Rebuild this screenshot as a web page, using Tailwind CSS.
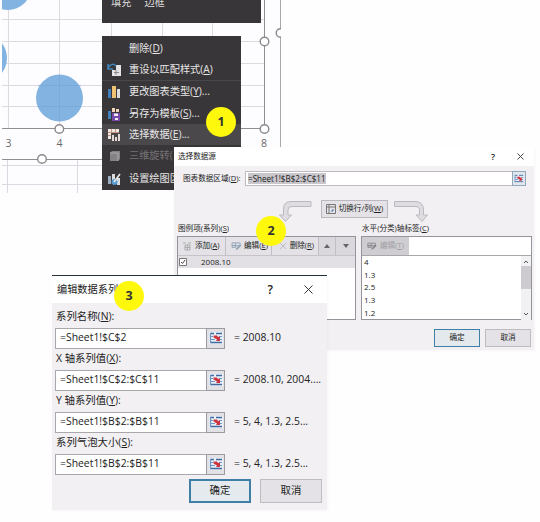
<!DOCTYPE html>
<html lang="zh-CN">
<head>
<meta charset="utf-8">
<title>编辑数据系列</title>
<script src="https://cdn.jsdelivr.net/npm/@tailwindcss/browser@4"></script>
</head>
<body class="bg-[#fefefe]">
<svg width="0" height="0" class="absolute">
  <defs>
    <symbol id="range" viewBox="0 0 14 12">
      <rect width="14" height="12" fill="#eaf0f7"/>
      <path d="M1 1.500h4M7 1.500h6M1 10.500h12" stroke="#41699f" stroke-width="1.300"/>
      <path d="M1 4.500h3M10 4.500h3M1 7.500h5M10 7.500h3M1.500 1v10" stroke="#6f96c4" stroke-width="1.200"/>
      <path d="M4.500 3.500H8L9 5l2-.5V9H7l1-1.500-3.500-2z" fill="#cc3540"/>
    </symbol>
    <symbol id="edit" viewBox="0 0 12 10">
      <path d="M1 1h9v3H1zM1 4h4v2H1zM5 1v3" fill="none" stroke="currentColor"/>
      <path d="M5 9l1-2.500L10 3l1.500 1L7.500 8z" fill="currentColor"/>
    </symbol>
  </defs>
</svg>
<main class="relative h-[522px] w-[540px] overflow-hidden font-['Open_Sans','Noto_Sans_CJK_SC',sans-serif] text-[#222]">

  <!-- chart -->
  <svg class="absolute left-[2px] top-0" width="279" height="193" viewBox="2 0 279 193">
    <rect x="2" width="279" height="193" fill="#fdfcfe"/>
    <path d="M2 19.500H264M2 41.500H264M2 63.500H264M2 85.500H264M2 106.500H264M8.500 0V128M59.500 0V128M111.500 0V128M162.500 0V128M212.500 0V128" stroke="#dcd9df"/>
    <path d="M7.500 160V193M77.500 160V193M2 165.500H102M2 184.500H102" stroke="#dcd9e2"/>
    <g fill="#82b3e1"><circle cx="8" cy="-13" r="23"/><circle cx="-17" cy="58" r="24"/><circle cx="59.500" cy="98" r="23.500"/></g>
    <path d="M38 85.500H81M38 106.500H81M59.500 75V121" stroke="#75a5d5" opacity=".6"/>
    <path d="M2 128.500H264.500M264.500 0V128M2 159.500H102" fill="none" stroke="#908e91"/>
    <path d="M280.500 0V147" stroke="#aaa8ab"/>
    <g fill="#fff" stroke="#8b898c" stroke-width="1.400"><circle cx="59.300" cy="129" r="4.300"/><circle cx="42" cy="159" r="4.300"/><circle cx="264.500" cy="41.500" r="4.300"/><circle cx="264.500" cy="129" r="4.300"/><circle cx="280.500" cy="33" r="4.300"/></g>
    <g font-size="10.500" fill="#6b6b6b" text-anchor="middle"><text x="8.500" y="146.500">3</text><text x="59.500" y="146.500">4</text><text x="264" y="146.500">8</text></g>
  </svg>

  <!-- mini toolbar -->
  <div class="absolute left-[102px] top-0 flex h-[23px] w-[159px] gap-[13px] overflow-hidden bg-[#393639] pl-[9px] text-[10.200px] leading-[10px] text-[#dedede]">
    <span class="-mt-[3px]">填充</span><span class="-mt-[3px]">边框</span>
  </div>

  <!-- context menu -->
  <div class="absolute left-[102px] top-[36px] flex h-[154px] w-[139px] flex-col overflow-hidden bg-[#393639] pt-[2px] text-[10.200px] whitespace-nowrap text-[#e6e6e6]">
    <div class="flex h-[22px] shrink-0 items-center pl-[27px]">删除(<u>D</u>)</div>
    <div class="flex h-[21px] shrink-0 items-center border-b border-[#4a474a]">
      <svg class="mx-[5px]" width="17" height="14"><path d="M5 7h9v6H5zM9 2h5v5H9z" fill="#e4e4e4"/><path d="M7 9.500h5M9 7v5" stroke="#888"/><path d="M1 1v5h5M1 5C4 0 7 1 9 3" fill="none" stroke="#4386bd" stroke-width="1.500"/></svg>重设以匹配样式(<u>A</u>)</div>
    <div class="flex h-[22px] shrink-0 items-center">
      <svg class="mx-[5px]" width="17" height="14"><path d="M1 4h3v9H1z" fill="#3f80bd"/><path d="M5 1h4v12H5z" fill="#edc373"/><path d="M10 4h3v9h-3z" fill="#ddd"/></svg>更改图表类型(<u>Y</u>)...</div>
    <div class="flex h-[21px] shrink-0 items-center">
      <svg class="mx-[5px]" width="17" height="14"><path d="M1 4h3v8H1z" fill="#3f80bd"/><path d="M5 1h3v4H5zM9 2h3v3H9z" fill="#eed4bb"/><path d="M5 6h8v8H5z" fill="#7948ac"/><path d="M7 6.500h4v2.500H7zM8 11h3v2H8z" fill="#eee"/></svg>另存为模板(<u>S</u>)...</div>
    <div class="flex h-[21px] shrink-0 items-center bg-[#4b484b]">
      <svg class="mx-[5px]" width="17" height="14"><path d="M1 1h11v4H4v6H1z" fill="#f0e7e2"/><path d="M1 4.500h11M4.500 1v3M8.500 1v3M1 7.500h3" stroke="#c49482"/><path d="M5 7h2v6H5zM8 9h2v4H8zM11 6h2v7h-2z" fill="#e4d9d6"/></svg>选择数据(<u>E</u>)...</div>
    <div class="flex h-[22px] shrink-0 items-center text-[#757275]">
      <svg class="mx-[5px]" width="17" height="14"><path d="M3 4l2-2h8v8l-2 2H3z" fill="#858285"/><path d="M3 4h8v8" fill="none" stroke="#aaa"/></svg>三维旋转(</div>
    <div class="flex h-[23px] shrink-0 items-center">
      <svg class="mx-[5px]" width="17" height="14"><path d="M1 4h3v8H1z" fill="#9baec0"/><path d="M5 2h3v6H5zM10 6h3v7h-3z" fill="#ddd"/><circle cx="7.500" cy="10" r="3" fill="#559bd0"/><path d="M7 10l6-8" stroke="#eee" stroke-width="1.500"/></svg>设置绘图区</div>
  </div>

  <!-- select data source dialog -->
  <section class="absolute left-[174px] top-[147px] flex h-[203px] w-[360px] flex-col bg-[#f2f0f3] text-[7.600px] whitespace-nowrap shadow-[1px_1px_3px_#00000008]">
    <header class="flex h-[19px] shrink-0 items-center bg-white pl-[4px]">
      <span class="flex-1">选择数据源</span>
      <span class="mr-[22px] text-[9px] font-semibold">?</span>
      <svg class="mr-[10px]" width="7" height="7"><path d="M.5.5l6 6M6.500.5l-6 6" stroke="#444"/></svg>
    </header>
    <div class="mt-[5px] flex h-[15px] shrink-0 items-center pl-[9px]">
      <span class="w-[62px]">图表数据区域(<u>D</u>):</span>
      <div class="flex h-[15px] w-[281px] items-center border border-[#bdbbc0] bg-white pl-[2px]">
        <span class="bg-[#c9c7cc] text-[8.100px] leading-[11px]">=Sheet1!$B$2:$C$11</span>
        <span class="flex-1"></span>
        <span class="-my-px -mr-px flex h-[15px] w-[14px] items-center justify-center border border-[#8fa9bc] bg-[#e3e6eb]"><svg width="10" height="9"><use href="#range" width="10" height="9"/></svg></span>
      </div>
    </div>
    <div class="mt-[14px] flex h-[22px] shrink-0 pl-[102px]">
      <svg width="37" height="22"><path d="M35 1.500H15Q7.500 1.500 7.500 9V15H3.500L9.500 21.500 15.500 15H12V10Q12 6.500 16 6.500H35Z" fill="#dedce0" stroke="#bbb9be"/></svg>
      <div class="ml-[8px] flex h-[18px] w-[67px] items-center justify-center gap-[3px] border border-[#bab8be] bg-[#e4e2e6]">
        <svg width="10" height="10"><path d="M.5.5h9v9H.500zM.5 3h9M3 .5v9" fill="none" stroke="#777"/><path d="M5 7h2V5" fill="none" stroke="#447bb0"/></svg><span>切换行/列(<u>W</u>)</span>
      </div>
      <svg class="ml-[5px]" width="37" height="22"><path d="M1.500 1.500H22Q30.500 1.500 30.500 10V15H34.500L29 21.500 23 15H26.500V10Q26.500 6.500 22 6.500H1.500Z" fill="#dedce0" stroke="#bbb9be"/></svg>
    </div>
    <div class="flex h-[14px] shrink-0 items-center pl-[4px]"><span class="w-[184px]">图例项(系列)(<u>S</u>)</span><span>水平(分类)轴标签(<u>C</u>)</span></div>
    <div class="flex h-[84px] shrink-0 gap-[5px] pl-[3px]">
      <div class="flex w-[179px] flex-col border border-[#96949a] bg-white">
        <div class="flex h-[19px] shrink-0 border-b border-[#c6c4c9] bg-[#e4e2e6]">
          <div class="flex w-[48px] items-center gap-[3px] border-r border-[#c1bfc5] pl-[5px]"><svg width="9" height="9"><path d="M2 3h5v5H2zM2 5.500h5M4.500 3v5M0 1h3M5 1h3" fill="none" stroke="#aaa"/></svg><span>添加(<u>A</u>)</span></div>
          <div class="flex w-[46px] items-center gap-[2px] border-r border-[#c1bfc5] pl-[5px]"><svg class="text-[#8fa2b5]" width="11" height="9"><use href="#edit" width="11" height="9"/></svg><span>编辑(<u>E</u>)</span></div>
          <div class="flex w-[47px] items-center justify-end gap-[3px] border-r border-[#c1bfc5] pr-[4px]"><svg width="8" height="8"><path d="M1 1l6 6M7 1l-6 6" stroke="#bdbbc0"/></svg><span>删除(<u>R</u>)</span></div>
          <div class="flex w-[17px] items-center justify-center border-r border-[#c1bfc5] bg-[#dad8dd]"><svg width="6" height="4"><path d="M0 4l3-4 3 4z" fill="#666"/></svg></div>
          <div class="flex flex-1 items-center justify-center bg-[#dad8dd]"><svg width="6" height="4"><path d="M0 0h6L3 4z" fill="#666"/></svg></div>
        </div>
        <div class="flex h-[12px] shrink-0 items-center bg-[#e2e0e5] pl-[1px] text-[8px]"><svg class="mr-[14px]" width="8" height="8"><path d="M.5.5h7v7h-7z" fill="#fff" stroke="#777"/><path d="M2 4l1.500 1.500L6 2" fill="none" stroke="#444"/></svg>2008.10</div>
      </div>
      <div class="flex w-[171px] flex-col border border-[#96949a] bg-white">
        <div class="flex h-[19px] shrink-0 border-b border-[#a9a7ac]"><div class="flex w-[47px] items-center gap-[3px] bg-[#cfcdd2] pl-[5px] text-[#a09ea3]"><svg class="text-[#858388]" width="10" height="9"><use href="#edit" width="10" height="9"/></svg><span>编辑(<u>T</u>)</span></div></div>
        <div class="flex flex-1 justify-between">
          <div class="flex flex-col pl-[2px] text-[8px] leading-[12.700px]"><span>4</span><span>1.3</span><span>2.5</span><span>1.3</span><span>1.2</span></div>
          <div class="flex w-[10px] flex-col items-center justify-between bg-[#f1f0f2] py-[3px]">
            <svg width="6" height="5"><path d="M1 4l2-2 2 2" fill="none" stroke="#555"/></svg>
            <div class="mb-[20px] h-[23px] w-[10px] bg-[#cdcbd0]"></div>
            <svg width="6" height="5"><path d="M1 1l2 2 2-2" fill="none" stroke="#555"/></svg>
          </div>
        </div>
      </div>
    </div>
    <div class="mt-[9px] flex h-[18px] shrink-0 justify-end gap-[5px] pr-[3px]">
      <div class="flex w-[46px] items-center justify-center border border-[#3f7fa5] bg-[#e4e9ed]">确定</div>
      <div class="flex w-[46px] items-center justify-center border border-[#bebcc1] bg-[#e4e2e6]">取消</div>
    </div>
  </section>

  <!-- edit series dialog -->
  <section class="absolute left-[52px] top-[275px] flex h-[235px] w-[275px] flex-col border-t border-[#26333f] bg-[#f2f0f3] text-[10.400px] whitespace-nowrap shadow-[1px_1px_3px_#00000008]">
    <header class="flex h-[27px] shrink-0 items-center bg-white pl-[5px] text-[10.200px]">
      <span class="flex-1">编辑数据系列</span>
      <span class="mr-[31px] text-[12px] font-semibold">?</span>
      <svg class="mr-[14px]" width="9" height="9"><path d="M.5.5l8 8M8.500.5l-8 8" stroke="#333"/></svg>
    </header>
    <div class="mt-[4px] flex h-[20px] shrink-0 items-center pl-[4px]"><span>系列名称(<u>N</u>):</span></div>
    <div class="flex h-[22px] shrink-0 items-center pl-[3px]"><div class="flex h-[21px] w-[170px] items-center border border-[#aaa8ad] bg-white pl-[4px]"><span class="flex-1">=Sheet1!$C$2</span><span class="-mr-px flex h-[21px] w-[19px] items-center justify-center border border-[#9b9aa0] bg-[#e2e1e5]"><svg width="14" height="12"><use href="#range" width="14" height="12"/></svg></span></div><span class="ml-[9px]">= 2008.10</span></div>
    <div class="flex h-[20px] shrink-0 items-center pl-[4px]"><span>X 轴系列值(<u>X</u>):</span></div>
    <div class="flex h-[22px] shrink-0 items-center pl-[3px]"><div class="flex h-[21px] w-[170px] items-center border border-[#aaa8ad] bg-white pl-[4px]"><span class="flex-1">=Sheet1!$C$2:$C$11</span><span class="-mr-px flex h-[21px] w-[19px] items-center justify-center border border-[#9b9aa0] bg-[#e2e1e5]"><svg width="14" height="12"><use href="#range" width="14" height="12"/></svg></span></div><span class="ml-[9px]">= 2008.10, 2004....</span></div>
    <div class="flex h-[20px] shrink-0 items-center pl-[4px]"><span>Y 轴系列值(<u>Y</u>):</span></div>
    <div class="flex h-[22px] shrink-0 items-center pl-[3px]"><div class="flex h-[21px] w-[170px] items-center border border-[#aaa8ad] bg-white pl-[4px]"><span class="flex-1">=Sheet1!$B$2:$B$11</span><span class="-mr-px flex h-[21px] w-[19px] items-center justify-center border border-[#9b9aa0] bg-[#e2e1e5]"><svg width="14" height="12"><use href="#range" width="14" height="12"/></svg></span></div><span class="ml-[9px]">= 5, 4, 1.3, 2.5...</span></div>
    <div class="flex h-[20px] shrink-0 items-center pl-[4px]"><span>系列气泡大小(<u>S</u>):</span></div>
    <div class="flex h-[22px] shrink-0 items-center pl-[3px]"><div class="flex h-[21px] w-[170px] items-center border border-[#aaa8ad] bg-white pl-[4px]"><span class="flex-1">=Sheet1!$B$2:$B$11</span><span class="-mr-px flex h-[21px] w-[19px] items-center justify-center border border-[#9b9aa0] bg-[#e2e1e5]"><svg width="14" height="12"><use href="#range" width="14" height="12"/></svg></span></div><span class="ml-[9px]">= 5, 4, 1.3, 2.5...</span></div>
    <div class="mt-[4px] flex h-[24px] shrink-0 justify-end gap-[9px] pr-[5px]">
      <div class="flex w-[62px] items-center justify-center border-2 border-[#3f7fa5] bg-[#e4eaee]">确定</div>
      <div class="flex w-[62px] items-center justify-center border border-[#bebcc1] bg-[#e4e2e6]">取消</div>
    </div>
  </section>

  <!-- step badges -->
  <div class="absolute left-[206px] top-[107px] flex size-[30px] items-center justify-center rounded-full bg-[#fdf80c] text-[12.500px] font-bold text-[#333]">1</div>
  <div class="absolute left-[256px] top-[216px] flex size-[30px] items-center justify-center rounded-full bg-[#fdf80c] text-[12.500px] font-bold text-[#333]">2</div>
  <div class="absolute left-[114px] top-[281px] flex size-[30px] items-center justify-center rounded-full bg-[#fdf80c] text-[12.500px] font-bold text-[#333]">3</div>
</main>
</body>
</html>
